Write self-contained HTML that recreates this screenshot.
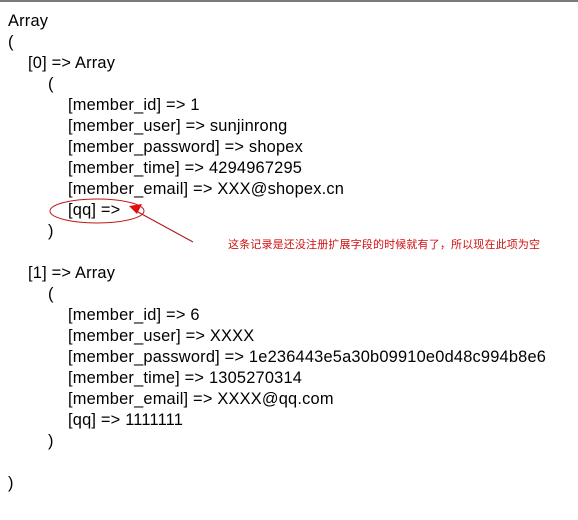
<!DOCTYPE html>
<html><head><meta charset="utf-8"><style>
html,body{margin:0;padding:0;background:#fff;width:578px;height:520px;overflow:hidden}
body{position:relative;font-family:"Liberation Sans",sans-serif;font-size:16.4px;color:#000}
.top{position:absolute;left:0;top:0;width:578px;height:2px;background:#7a7a7a}
.l{position:absolute;white-space:pre;line-height:21px;letter-spacing:0.2px}
.cn{position:absolute;left:228px;top:236px;font-family:"Liberation Sans","Noto Sans CJK SC",sans-serif;font-size:11px;letter-spacing:0.15px;color:#d01010;white-space:nowrap}
svg{position:absolute;left:0;top:0}
</style></head><body>
<div class="top"></div>
<div class="l" style="left:8px;top:11px">Array</div>
<div class="l" style="left:8px;top:32px">(</div>
<div class="l" style="left:28px;top:53px">[0] =&gt; Array</div>
<div class="l" style="left:48px;top:74px">(</div>
<div class="l" style="left:68px;top:95px">[member_id] =&gt; 1</div>
<div class="l" style="left:68px;top:116px">[member_user] =&gt; sunjinrong</div>
<div class="l" style="left:68px;top:137px">[member_password] =&gt; shopex</div>
<div class="l" style="left:68px;top:158px">[member_time] =&gt; 4294967295</div>
<div class="l" style="left:68px;top:179px">[member_email] =&gt; XXX@shopex.cn</div>
<div class="l" style="left:68px;top:200px">[qq] =&gt; </div>
<div class="l" style="left:48px;top:221px">)</div>
<div class="l" style="left:28px;top:263px">[1] =&gt; Array</div>
<div class="l" style="left:48px;top:284px">(</div>
<div class="l" style="left:68px;top:305px">[member_id] =&gt; 6</div>
<div class="l" style="left:68px;top:326px">[member_user] =&gt; XXXX</div>
<div class="l" style="left:68px;top:347px">[member_password] =&gt; 1e236443e5a30b09910e0d48c994b8e6</div>
<div class="l" style="left:68px;top:368px">[member_time] =&gt; 1305270314</div>
<div class="l" style="left:68px;top:389px">[member_email] =&gt; XXXX@qq.com</div>
<div class="l" style="left:68px;top:410px">[qq] =&gt; 1111111</div>
<div class="l" style="left:48px;top:431px">)</div>
<div class="l" style="left:8px;top:473px">)</div>
<svg width="578" height="520">
<ellipse cx="97" cy="211" rx="47" ry="12" fill="none" stroke="#c01818" stroke-width="1"/>
<line x1="193" y1="242" x2="138" y2="212" stroke="#b01818" stroke-width="1"/>
<polygon points="129,206 142,204 137,214" fill="#e01010"/>
</svg>
<div class="cn">这条记录是还没注册扩展字段的时候就有了，所以现在此项为空</div>
</body></html>
